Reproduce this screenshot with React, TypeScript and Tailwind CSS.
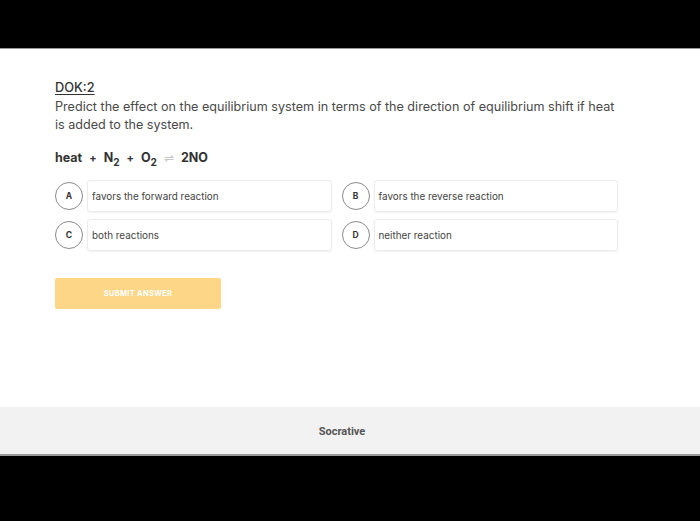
import React from "react";

const options = [
  { letter: "A", text: "favors the forward reaction" },
  { letter: "B", text: "favors the reverse reaction" },
  { letter: "C", text: "both reactions" },
  { letter: "D", text: "neither reaction" },
];

export default function App() {
  return (
    <div
      className="w-[700px] h-[521px] flex flex-col bg-black overflow-hidden"
      style={{ fontFamily: "Inter, 'Noto Sans', sans-serif" }}
    >
      <div className="h-[49px] bg-black border-b border-[#9a9a9a] shrink-0" />
      <div className="flex-1 bg-white pl-[55px] pt-[30px]">
        <div className="w-[568px]">
          <div className="text-[12.8px] leading-[18px] text-[#333] underline underline-offset-2 font-medium">
            DOK:2
          </div>
          <p className="text-[12.6px] leading-[18px] text-[#4a4a4a] mt-[1px]">
            Predict the effect on the equilibrium system in terms of the direction of equilibrium shift if heat is added to the system.
          </p>
          <div className="mt-[15px] text-[12.5px] leading-[18px] font-bold text-[#333] flex items-center gap-[7px]">
            <span>heat</span>
            <span className="text-[11px]">+</span>
            <span>
              N<sub className="text-[10px] align-[-1px]">2</sub>
            </span>
            <span className="text-[11px]">+</span>
            <span>
              O<sub className="text-[10px] align-[-1px]">2</sub>
            </span>
            <span className="text-[#c4c4c4] font-normal text-[12px]">⇌</span>
            <span>2NO</span>
          </div>
          <div className="mt-[13px] grid grid-cols-2 gap-x-[10px] gap-y-[7px] w-[563px]">
            {options.map((o) => (
              <div key={o.letter} className="flex items-center gap-[4px]">
                <div className="w-[28px] h-[28px] rounded-full border border-[#8a8a8a] flex items-center justify-center text-[8.5px] font-bold text-[#333] shrink-0">
                  {o.letter}
                </div>
                <div className="flex-1 h-[32px] rounded-[3px] border border-[#ececec] shadow-[0_1px_2px_rgba(0,0,0,0.06)] flex items-center pl-[4px] text-[9.9px] text-[#444]">
                  {o.text}
                </div>
              </div>
            ))}
          </div>
          <button className="mt-[27px] w-[166px] h-[31px] rounded-[2px] bg-[#fdd688] text-white text-[7.5px] font-bold tracking-[0.3px] flex items-center justify-center">
            SUBMIT ANSWER
          </button>
        </div>
      </div>
      <div className="h-[49px] bg-[#f2f2f2] border-b-2 border-[#9a9a9a] flex items-center justify-center shrink-0 pr-[16px] pt-[3px]">
        <span
          className="text-[11px] font-bold text-[#555]"
          style={{ fontFamily: "Roboto, sans-serif" }}
        >
          Socrative
        </span>
      </div>
      <div className="h-[65px] bg-black shrink-0" />
    </div>
  );
}
